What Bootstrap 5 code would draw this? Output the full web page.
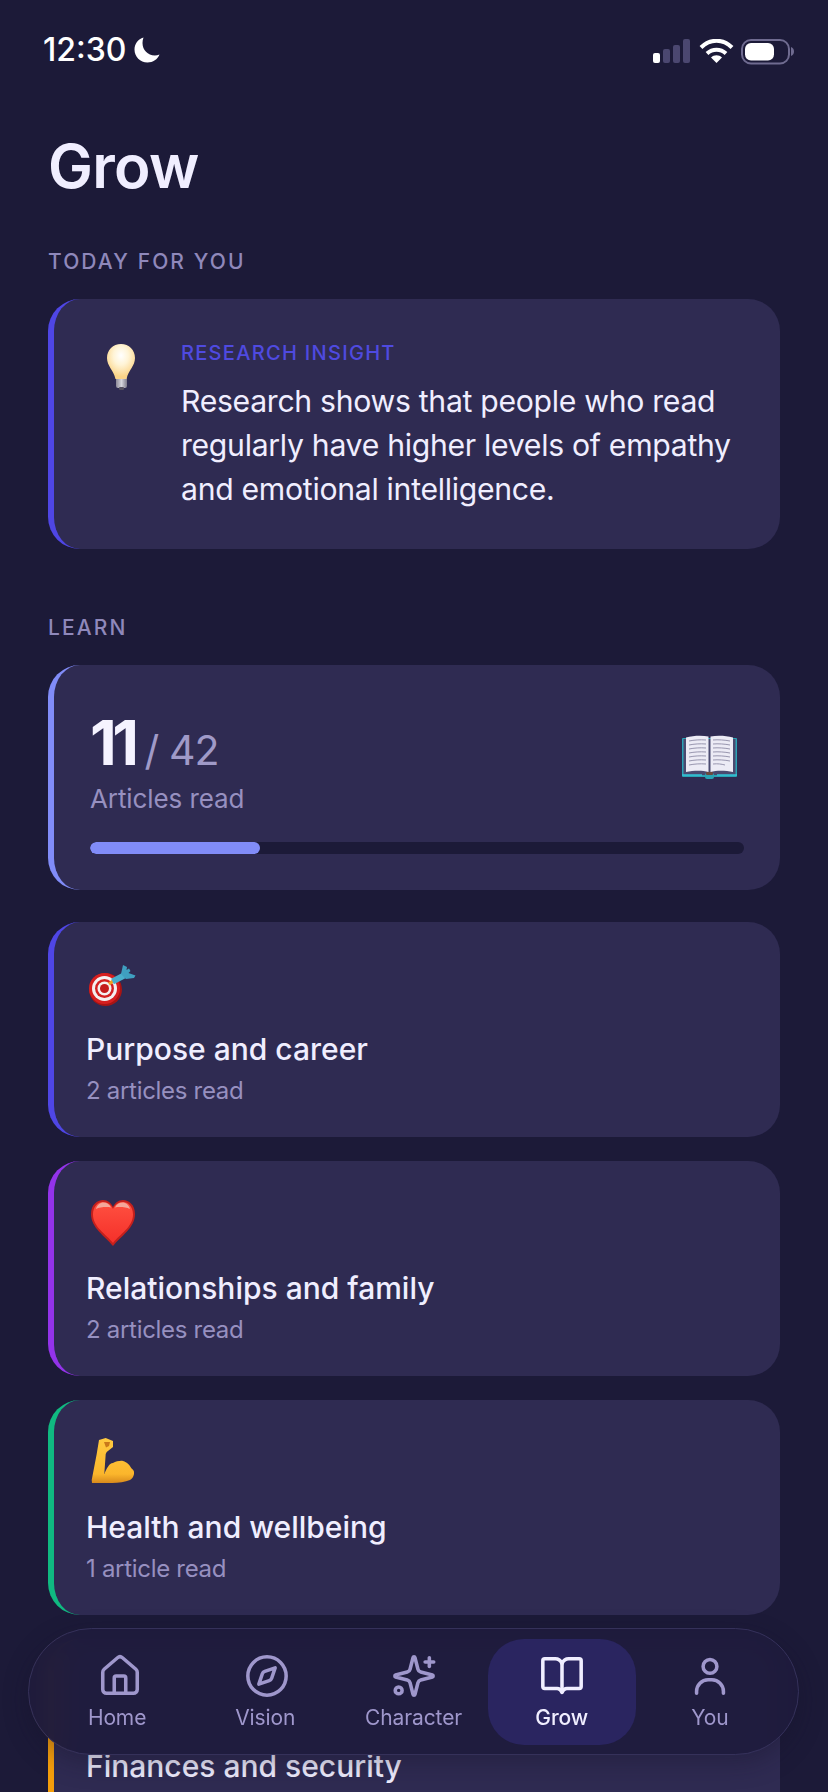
<!doctype html>
<html lang="en">
<head>
<meta charset="utf-8">
<title>Grow</title>
<link rel="stylesheet" href="https://cdn.jsdelivr.net/npm/bootstrap@5.3.0/dist/css/bootstrap.min.css">
<style>
html,body{height:1792px;overflow:hidden;background:#1c1a38;}
body{font-family:"Inter","Noto Sans",sans-serif;color:#f0eeff;position:relative;}
.status-row{height:50px;margin-top:34px;padding:0 34px 0 43px;}
.status-time{font-size:32px;font-weight:500;color:#fff;line-height:32px;}
.status-icons{margin-top:5px;}
.page-body{padding:0 48px;}
.page-title{font-size:60px;font-weight:600;letter-spacing:-.7px;line-height:72px;margin:46px 0 0;color:#f0eeff;}
.sect-label{font-size:21px;font-weight:500;letter-spacing:2.1px;color:#8f88bb;line-height:24px;text-transform:uppercase;}
.sect-today{margin-top:48px;}
.tile{background:#2f2b52;border-left:6px solid #4f46e5;border-radius:32px;}
.tile-insight{height:250px;margin-top:25px;margin-bottom:67px;padding:42px 30px 0 53px;}
.bulb-pic{margin-top:3px;margin-right:46px;}
.insight-tag{font-size:20px;font-weight:500;letter-spacing:1.3px;color:#4f4ae0;line-height:24px;}
.insight-text{font-size:30.2px;line-height:44px;letter-spacing:-.3px;color:#f0eeff;margin-top:14px;}
.tile-stats{height:225px;margin-top:25px;border-left-color:#818cf8;padding:46px 36px 0 36px;}
.stat-big{font-size:62px;font-weight:700;line-height:64px;color:#f5f3ff;letter-spacing:-4.5px;}
.stat-rest{font-size:41px;color:#a09ac8;line-height:64px;margin-left:10px;letter-spacing:-.9px;}
.stat-cap{font-size:26px;color:#9790c0;line-height:32px;letter-spacing:-.1px;margin-top:1px;}
.book-pic{margin-top:24px;margin-right:7px;}
.stat-track{height:12px;background:#1c1a38;border-radius:6px;margin-top:27px;}
.stat-track .progress-bar{background:#818cf8;border-radius:6px;}
.tile-topic{height:215px;margin-top:24px;padding:0 30px 0 32px;}
.tile-first{margin-top:32px;}
.topic-pic{height:84px;padding-top:40px;padding-left:2px;}
.pic-dart{margin-top:3px;}
.pic-heart{margin:-1px 0 0 3px;}
.pic-arm{margin:-2px 0 0 3px;}
.topic-name{font-size:30px;font-weight:550;line-height:40px;color:#f0eeff;margin-top:23px;}
.topic-sub{font-size:24px;line-height:30px;color:#9790c0;letter-spacing:-.3px;margin-top:7px;}
.bar-purple{border-left-color:#9333ea;}
.bar-green{border-left-color:#10b981;}
.bar-orange{border-left-color:#f59e0b;}
.dock{position:absolute;left:28px;top:1628px;width:771px;height:127px;border:1px solid #35315a;border-radius:64px;background:rgba(30,27,60,.9);backdrop-filter:blur(12px);box-shadow:0 8px 24px rgba(20,17,40,.35);padding:10px 14px;}
.dock-item{flex:1 1 0;height:106px;border-radius:36px;color:#9f97cc;padding-top:14px;}
.dock-item svg{display:block;width:46px;height:46px;fill:none;stroke:currentColor;stroke-width:1.85;stroke-linecap:round;stroke-linejoin:round;}
.dock-item span{font-size:21px;line-height:24px;margin-top:7px;letter-spacing:-.1px;}
.dock-on{background:#2a2560;color:#f0eeff;}
.dock-on span{font-weight:500;}
.icon-nudge-home svg{margin-left:6px;}
.icon-nudge-vision svg{margin-left:3px;}
</style>
</head>
<body>
<header class="status-row d-flex justify-content-between align-items-start">
  <div class="d-flex align-items-center gap-2">
    <span class="status-time">12:30</span>
    <svg width="26" height="26" viewBox="0 0 26 26"><path fill="#fff" d="M9.5 0.5C4 2.2 0.5 7 0.5 12.5 0.5 19.8 6.2 25.5 13.5 25.5c5.400 0 10.100-3.200 12-8-1.500.6-3 .9-4.700.9C13.800 18.400 8.500 13 8.500 6c0-2 .3-3.800 1-5.500z"/></svg>
  </div>
  <svg width="142" height="26" viewBox="0 0 142 26" class="d-block status-icons">
    <rect x="1" y="14" width="7" height="10" rx="2" fill="#fff"/>
    <rect x="11" y="10" width="7" height="14" rx="2" fill="#4b4770"/>
    <rect x="21" y="6" width="7" height="18" rx="2" fill="#4b4770"/>
    <rect x="31" y="0" width="7" height="24" rx="2" fill="#4b4770"/>
    <g transform="translate(1 0)">
      <g fill="none" stroke="#fff" stroke-width="4">
        <path d="M48 8.500C57 -.5 70 -.5 79 8.500"/>
        <path d="M54 14.500C59.500 9.500 67.500 9.500 73 14.500"/>
      </g>
      <path fill="#fff" d="M63.500 24l-5.500-5.500c3-3 8-3 11 0z"/>
    </g>
    <rect x="90" y="1" width="47" height="23.500" rx="9" fill="none" stroke="#6f6b90" stroke-width="2"/>
    <rect x="93" y="4" width="29" height="17.500" rx="6" fill="#fff"/>
    <path fill="#6f6b90" d="M139 8c2 .6 3 2.500 3 4.500s-1 4-3 4.500z"/>
  </svg>
</header>

<main class="page-body">
  <h1 class="page-title">Grow</h1>

  <div class="sect-label sect-today">Today for you</div>
  <section class="tile tile-insight d-flex">
    <svg width="28" height="46" viewBox="0 0 28 46" class="flex-shrink-0 bulb-pic">
      <defs>
        <radialGradient id="glow" cx=".5" cy=".33" r=".6"><stop offset="0" stop-color="#fff"/><stop offset=".45" stop-color="#fff4d6"/><stop offset="1" stop-color="#fbd488"/></radialGradient>
        <linearGradient id="cap" x1="0" y1="0" x2="1" y2="0"><stop offset="0" stop-color="#8d8a98"/><stop offset=".5" stop-color="#d6d5dc"/><stop offset="1" stop-color="#7e7b8a"/></linearGradient>
      </defs>
      <rect x="9" y="33" width="11" height="11" rx="2" fill="url(#cap)"/>
      <rect x="12" y="43" width="5" height="3" rx="1" fill="#55505f"/>
      <path fill="url(#glow)" d="M14 0C6 0 0 6 0 14c0 8 6.500 12 8.500 21h11c2-9 8.500-13 8.500-21C28 6 22 0 14 0z"/>
    </svg>
    <div>
      <div class="insight-tag">RESEARCH INSIGHT</div>
      <p class="insight-text mb-0">Research shows that people who read regularly have higher levels of empathy and emotional intelligence.</p>
    </div>
  </section>

  <div class="sect-label">Learn</div>
  <section class="tile tile-stats">
    <div class="d-flex justify-content-between align-items-start">
      <div>
        <div class="d-flex align-items-baseline"><span class="stat-big">11</span><span class="stat-rest">/ 42</span></div>
        <div class="stat-cap">Articles read</div>
      </div>
      <svg width="55" height="44" viewBox="0 0 55 44" class="flex-shrink-0 book-pic">
        <rect x="0" y="3" width="55" height="39" rx="1" fill="#2aa3b5"/>
        <rect x="1.500" y="4" width="52" height="36" fill="#4a4a70"/>
        <path d="M0 40h20M35 40h20" stroke="#35c3d6" stroke-width="1.500"/>
        <rect x="23" y="38" width="9" height="6" rx="2" fill="#2aa3b5"/>
        <rect x="24" y="37" width="7" height="3" rx="1" fill="#6b4a3f"/>
        <path fill="#ecebf5" d="M4 2.500C11 .5 20 0 26.500 1.500V37C20 35 11 35.500 4 37z"/>
        <path fill="#ecebf5" d="M28.500 1.500C35 0 44 .5 51 2.500V37c-7-1.500-16-2-22.500 0z"/>
        <g stroke="#8d8ba6" stroke-width=".9" fill="none">
          <path d="M7 6c5-1 11-1.500 17-1M7 10c5-1 11-1.500 17-1M7 14c5-1 11-1.500 17-1M7 18c5-1 11-1.500 17-1M7 22c5-1 11-1.500 17-1M7 26c5-1 11-1.500 17-1M7 30c5-1 11-1.500 17-1"/>
          <path d="M31 5c5-.5 12 0 17 1M31 9c5-.5 12 0 17 1M31 13c5-.5 12 0 17 1M31 17c5-.5 12 0 17 1M31 21c5-.5 12 0 17 1M31 25c5-.5 12 0 17 1M31 29c5-.5 8 0 12 1"/>
        </g>
      </svg>
    </div>
    <div class="progress stat-track"><div class="progress-bar" role="progressbar" style="width:26%"></div></div>
  </section>

  <section class="tile tile-topic tile-first">
    <div class="topic-pic">
      <svg width="48" height="41" viewBox="0 0 48 41" class="d-block pic-dart">
        <circle cx="17.500" cy="24.500" r="16.500" fill="#a81414"/>
        <circle cx="16.500" cy="23.500" r="15.500" fill="#d61f1f"/>
        <circle cx="16.500" cy="23.500" r="12.500" fill="#f4f0f0"/>
        <circle cx="16.500" cy="23.500" r="9.500" fill="#d32020"/>
        <circle cx="16.500" cy="23.500" r="7" fill="#f4f0f0"/>
        <circle cx="16.500" cy="23.500" r="4.500" fill="#c41c1c"/>
        <path d="M21 19l4-3" stroke="#f0a020" stroke-width="3"/>
        <path d="M24.500 16.500l11.500-6" stroke="#49aecb" stroke-width="6"/>
        <path fill="#3f9fc0" d="M33 9l2-9 4 2-.5 3 2.500-1.500 1.500 2.500-2 2 7 2.500-1.500 2.500-8 1z"/>
      </svg>
    </div>
    <div class="topic-name">Purpose and career</div>
    <div class="topic-sub">2 articles read</div>
  </section>

  <section class="tile tile-topic bar-purple">
    <div class="topic-pic">
      <svg width="44" height="46" viewBox="0 0 44 46" class="d-block pic-heart">
        <defs><linearGradient id="hrt" x1="0" y1="0" x2="0" y2="1"><stop offset="0" stop-color="#ff5040"/><stop offset="1" stop-color="#f5302a"/></linearGradient></defs>
        <path fill="#c4201c" d="M22 46C14 36 0 28 0 14 0 5 6 0 12 0c5 0 8 3 10 7 2-4 5-7 10-7 6 0 12 5 12 14 0 14-14 22-22 32z"/>
        <path fill="url(#hrt)" d="M22 43C15 34 2 27 2 14.500 2 6.500 7 2 12 2c5 0 8 3 10 7 2-4 5-7 10-7 5 0 10 4.500 10 12.500C42 27 29 34 22 43z"/>
        <path fill="#f4a79a" d="M5 9c1-4 4-6.500 7.500-6.500 3 0 6 1.800 7.500 5-4-1-11-.5-15 1.500zM24 7.500c1.500-3.200 4.500-5 7.500-5 3.500 0 6.500 2.500 7.500 6.500-4-2-11-2.500-15-1.500z"/>
      </svg>
    </div>
    <div class="topic-name">Relationships and family</div>
    <div class="topic-sub">2 articles read</div>
  </section>

  <section class="tile tile-topic bar-green">
    <div class="topic-pic">
      <svg width="43" height="45" viewBox="0 0 43 45" class="d-block pic-arm">
        <defs><linearGradient id="arm" x1="0" y1="0" x2="0" y2="1"><stop offset="0" stop-color="#ffca40"/><stop offset=".8" stop-color="#fbb62c"/><stop offset="1" stop-color="#d88a1c"/></linearGradient></defs>
        <path fill="url(#arm)" d="M.7 42L5.700 16 8 2l6.700-2L22 3v6l-6.300 5-1 2-1.400 20C16 30 18 25.500 22 25c3-1.500 7-2.500 10-2 4 1 7 4.500 8.600 7.600 2.400 2 3 4 2.400 5.400-.5 3-2 5-4 6-5 2-11 3-18 3H1z"/>
        <path fill="#c9781a" d="M13 4h6l-1 4-3 1.500z"/>
      </svg>
    </div>
    <div class="topic-name">Health and wellbeing</div>
    <div class="topic-sub">1 article read</div>
  </section>

  <section class="tile tile-topic bar-orange">
    <div class="topic-pic"></div>
    <div class="topic-name">Finances and security</div>
  </section>
</main>

<nav class="dock d-flex">
  <a class="dock-item icon-nudge-home d-flex flex-column align-items-center text-decoration-none">
    <svg viewBox="0 0 24 24"><path d="M15 21v-8a1 1 0 0 0-1-1h-4a1 1 0 0 0-1 1v8"/><path d="M3 10a2 2 0 0 1 .709-1.528l7-5.999a2 2 0 0 1 2.582 0l7 5.999A2 2 0 0 1 21 10v9a2 2 0 0 1-2 2H5a2 2 0 0 1-2-2z"/></svg>
    <span>Home</span>
  </a>
  <a class="dock-item icon-nudge-vision d-flex flex-column align-items-center text-decoration-none">
    <svg viewBox="0 0 24 24"><circle cx="12" cy="12" r="10"/><path d="m16.240 7.760-1.804 5.411a2 2 0 0 1-1.265 1.265L7.760 16.240l1.804-5.411a2 2 0 0 1 1.265-1.265z"/></svg>
    <span>Vision</span>
  </a>
  <a class="dock-item d-flex flex-column align-items-center text-decoration-none">
    <svg viewBox="0 0 24 24"><path d="M9.937 15.500A2 2 0 0 0 8.500 14.063l-6.135-1.582a.5.5 0 0 1 0-.962L8.500 9.936A2 2 0 0 0 9.937 8.500l1.582-6.135a.5.5 0 0 1 .963 0L14.063 8.500A2 2 0 0 0 15.500 9.937l6.135 1.581a.5.5 0 0 1 0 .964L15.500 14.063a2 2 0 0 0-1.437 1.437l-1.582 6.135a.5.5 0 0 1-.963 0z"/><path d="M20 2.500v4.500"/><path d="M22.300 4.700h-4.500"/><circle cx="4" cy="19.500" r="1.800"/></svg>
    <span>Character</span>
  </a>
  <a class="dock-item dock-on d-flex flex-column align-items-center text-decoration-none">
    <svg viewBox="0 0 24 24"><path d="M12 5.500v15"/><path d="M3 3h5.500c1.500 0 2.800.9 3.500 2.500C12.700 3.900 14 3 15.500 3H21c.6 0 1 .4 1 1v13.500c0 .6-.4 1-1 1h-6.500c-1 0-1.900.7-2.500 2-.6-1.300-1.500-2-2.500-2H3c-.6 0-1-.4-1-1V4c0-.6.4-1 1-1z"/></svg>
    <span>Grow</span>
  </a>
  <a class="dock-item d-flex flex-column align-items-center text-decoration-none">
    <svg viewBox="0 0 24 24"><circle cx="12" cy="7" r="3.600"/><path d="M5 21v-1a6 6 0 0 1 6-6h2a6 6 0 0 1 6 6v1"/></svg>
    <span>You</span>
  </a>
</nav>
<script src="https://cdn.jsdelivr.net/npm/bootstrap@5.3.0/dist/js/bootstrap.bundle.min.js"></script>
</body>
</html>
